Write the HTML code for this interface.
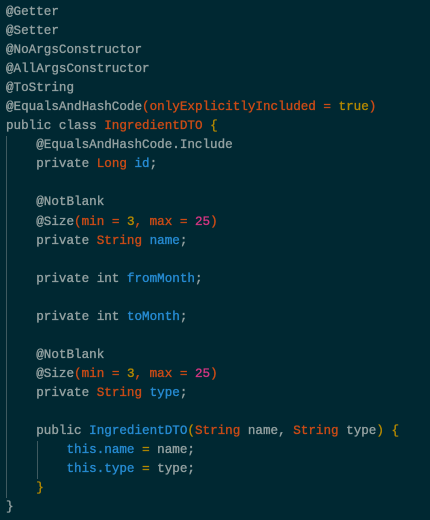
<!DOCTYPE html>
<html><head><style>
html,body{margin:0;padding:0;background:#002832;width:430px;height:520px;overflow:hidden}
pre{margin:0;position:absolute;left:6px;top:3px;font-family:"Liberation Mono",monospace;font-size:12.6px;line-height:19.04px;color:#93a1a1;-webkit-text-stroke:0.35px currentColor;}
.r{color:#cb4b16}.y{color:#b58900}.m{color:#d33682}.b{color:#268bd2}
.guide{position:absolute;width:1px;background:#3f5a60}
</style></head><body>
<div class="guide" style="left:6px;top:136px;height:362px"></div>
<div class="guide" style="left:37px;top:441px;height:38px"></div>
<pre>@Getter
@Setter
@NoArgsConstructor
@AllArgsConstructor
@ToString
@EqualsAndHashCode<span class="r">(onlyExplicitlyIncluded = </span><span class="y">true</span><span class="r">)</span>
public class <span class="r">IngredientDTO</span> <span class="y">{</span>
    @EqualsAndHashCode.Include
    private <span class="r">Long</span> <span class="b">id</span>;

    @NotBlank
    @Size<span class="r">(min = </span><span class="y">3</span><span class="r">, max = </span><span class="m">25</span><span class="r">)</span>
    private <span class="r">String</span> <span class="b">name</span>;

    private int <span class="b">fromMonth</span>;

    private int <span class="b">toMonth</span>;

    @NotBlank
    @Size<span class="r">(min = </span><span class="y">3</span><span class="r">, max = </span><span class="m">25</span><span class="r">)</span>
    private <span class="r">String</span> <span class="b">type</span>;

    public <span class="b">IngredientDTO</span><span class="y">(</span><span class="r">String</span> name, <span class="r">String</span> type<span class="y">) {</span>
        <span class="b">this.name</span> <span class="y">=</span> name;
        <span class="b">this.type</span> <span class="y">=</span> type;
    <span class="y">}</span>
}</pre>
</body></html>
